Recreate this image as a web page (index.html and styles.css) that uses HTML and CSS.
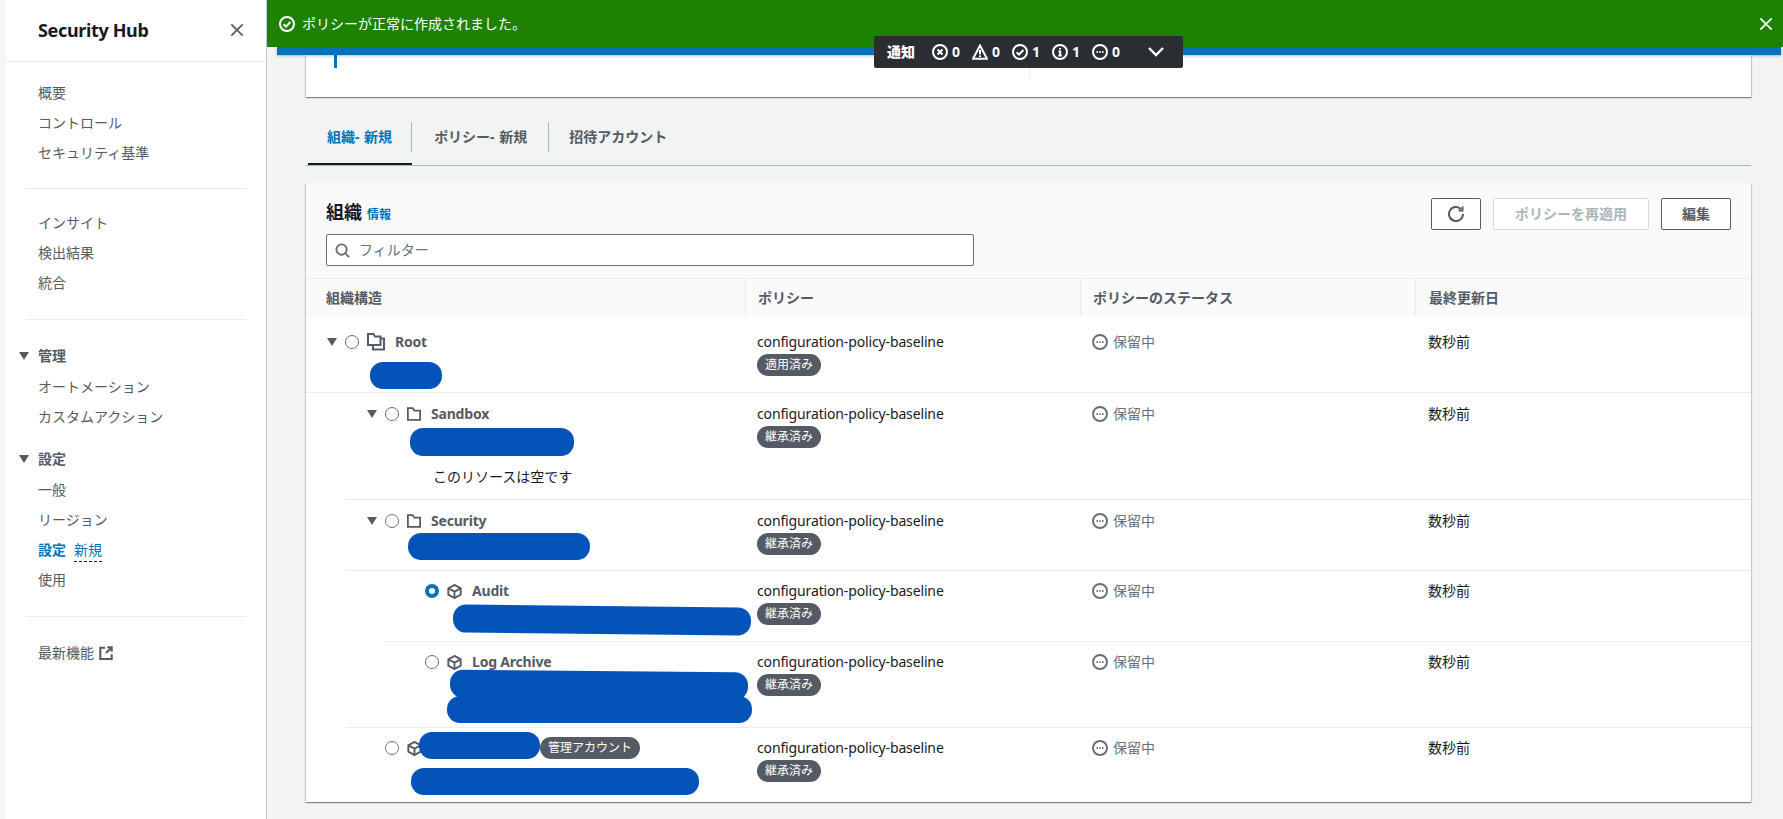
FILE: index.html
```html
<!doctype html>
<html lang="ja">

<head>
  <meta charset="UTF-8" />
  <title>Security Hub</title>
  <link rel="stylesheet" href="styles.css">
</head>

<body>
  <svg class="sprite" aria-hidden="true">
    <symbol id="i-check" viewBox="0 0 16 16"><circle cx="8" cy="8" r="7" /><path d="M4.6 8.2l2.4 2.4 4.4-4.6" /></symbol>
    <symbol id="i-x-circle" viewBox="0 0 16 16"><circle cx="8" cy="8" r="7" /><path d="M5.500 5.500l5 5M10.500 5.500l-5 5" /></symbol>
    <symbol id="i-warn" viewBox="0 0 16 16"><path d="M8 1.500L15 14.700H1z" /><path d="M8 6v4.400M8 11.600v1.400" /></symbol>
    <symbol id="i-info" viewBox="0 0 16 16"><circle cx="8" cy="8" r="7" /><path d="M6.400 7.400H8.200v4M6.400 11.400h3.400M8 4v1.600" /></symbol>
    <symbol id="i-pending" viewBox="0 0 16 16"><circle cx="8" cy="8" r="7" /><path d="M4.500 8h1.400M7.300 8h1.400M10.100 8h1.400" /></symbol>
    <symbol id="i-folder" viewBox="0 0 16 16"><path d="M1 1.200h5.500l1.800 2.800H15v10.800H1z" /></symbol>
    <symbol id="i-root" viewBox="0 0 18 18"><path d="M1 1h5.500l1.500 2.500h5.500V12H1z" /><path d="M13.500 5.500H17v11H6V12" /></symbol>
    <symbol id="i-cube" viewBox="0 0 16 16"><path d="M8 1l6.600 3.600v6.800L8 15l-6.600-3.600V4.600z" /><path d="M1.400 4.600L8 8.200l6.600-3.600M8 8.200V15" /></symbol>
    <symbol id="i-close" viewBox="0 0 16 16"><path d="M1.500 1.500l13 13M14.500 1.500l-13 13" /></symbol>
  </svg>

  <div class="app">
    <div class="edge"></div>

    <nav class="sidebar">
      <header class="side-head">
        <div class="side-title">Security Hub</div>
        <svg class="icon side-close"><use href="#i-close" /></svg>
      </header>
      <ul class="side-list first">
        <li>概要</li>
        <li>コントロール</li>
        <li>セキュリティ基準</li>
      </ul>
      <div class="side-divider"></div>
      <ul class="side-list">
        <li>インサイト</li>
        <li>検出結果</li>
        <li>統合</li>
      </ul>
      <div class="side-divider"></div>
      <div class="side-group"><span class="caret"></span>管理</div>
      <ul class="side-list tight">
        <li>オートメーション</li>
        <li>カスタムアクション</li>
      </ul>
      <div class="side-group next"><span class="caret"></span>設定</div>
      <ul class="side-list tight last">
        <li>一般</li>
        <li>リージョン</li>
        <li><span class="side-active">設定</span><span class="side-new">新規</span></li>
        <li>使用</li>
      </ul>
      <div class="side-divider"></div>
      <ul class="side-list bottom">
        <li class="side-ext">最新機能
          <svg class="ext-icon" viewBox="0 0 16 16"><path d="M14.500 9.500v5.500H1.500V2H7" /><path d="M9.500 1.500h5v5" /><path d="M14 2L8 8" /></svg>
        </li>
      </ul>
    </nav>

    <main class="main">
      <div class="flash">
        <svg class="icon flash-icon"><use href="#i-check" /></svg>
        <span class="flash-text">ポリシーが正常に作成されました。</span>
        <svg class="icon flash-close"><use href="#i-close" /></svg>
      </div>
      <div class="blue-bar"></div>
      <section class="top-card">
        <div class="top-mark"></div>
        <div class="top-split"></div>
      </section>

      <div class="tabs">
        <div class="tab active"><span>組織- 新規</span></div>
        <div class="tab"><span>ポリシー- 新規</span></div>
        <div class="tab"><span>招待アカウント</span></div>
      </div>

      <section class="card">
        <div class="card-head">
          <div class="card-left">
            <div class="card-title">
              <h2>組織</h2>
              <a class="info-link">情報</a>
            </div>
            <div class="filter">
              <svg class="search-icon" viewBox="0 0 16 16"><circle cx="7" cy="7" r="5.500" /><path d="M11 11L15 15" /></svg>
              <span>フィルター</span>
            </div>
          </div>
          <div class="card-actions">
            <button class="btn btn-icon">
              <svg viewBox="0 0 16 16"><path d="M15 8a7 7 0 1 1-2.200-5.100" /><path d="M14.500 0.500v4h-4" /></svg>
            </button>
            <button class="btn btn-apply" disabled>ポリシーを再適用</button>
            <button class="btn btn-edit">編集</button>
          </div>
        </div>

        <div class="row table-head">
          <div>組織構造</div>
          <div>ポリシー</div>
          <div>ポリシーのステータス</div>
          <div class="col-date">最終更新日</div>
        </div>

        <div class="row row-root">
          <div class="tree">
            <div class="node">
              <span class="caret"></span><span class="radio"></span>
              <svg class="icon node-icon root-icon"><use href="#i-root" /></svg>
              <span class="node-name">Root</span>
            </div>
            <div class="redact r-root"></div>
          </div>
          <div class="cell"><div class="policy">configuration-policy-baseline</div><span class="badge">適用済み</span></div>
          <div class="cell status"><svg class="icon"><use href="#i-pending" /></svg>保留中</div>
          <div class="cell col-date">数秒前</div>
        </div>

        <div class="row row-sandbox">
          <div class="tree line-40">
            <div class="node">
              <span class="caret"></span><span class="radio"></span>
              <svg class="icon node-icon folder-icon"><use href="#i-folder" /></svg>
              <span class="node-name">Sandbox</span>
            </div>
            <div class="redact r-sandbox"></div>
            <div class="empty">このリソースは空です</div>
          </div>
          <div class="cell"><div class="policy">configuration-policy-baseline</div><span class="badge">継承済み</span></div>
          <div class="cell status"><svg class="icon"><use href="#i-pending" /></svg>保留中</div>
          <div class="cell col-date">数秒前</div>
        </div>

        <div class="row row-security">
          <div class="tree line-40">
            <div class="node">
              <span class="caret"></span><span class="radio"></span>
              <svg class="icon node-icon folder-icon"><use href="#i-folder" /></svg>
              <span class="node-name">Security</span>
            </div>
            <div class="redact r-security"></div>
          </div>
          <div class="cell"><div class="policy">configuration-policy-baseline</div><span class="badge">継承済み</span></div>
          <div class="cell status"><svg class="icon"><use href="#i-pending" /></svg>保留中</div>
          <div class="cell col-date">数秒前</div>
        </div>

        <div class="row row-audit">
          <div class="tree line-80">
            <div class="node">
              <span class="caret hidden"></span><span class="radio checked"></span>
              <svg class="icon node-icon"><use href="#i-cube" /></svg>
              <span class="node-name">Audit</span>
            </div>
            <div class="redact r-audit"></div>
          </div>
          <div class="cell"><div class="policy">configuration-policy-baseline</div><span class="badge">継承済み</span></div>
          <div class="cell status"><svg class="icon"><use href="#i-pending" /></svg>保留中</div>
          <div class="cell col-date">数秒前</div>
        </div>

        <div class="row row-log">
          <div class="tree line-40 deep">
            <div class="node">
              <span class="caret hidden"></span><span class="radio"></span>
              <svg class="icon node-icon"><use href="#i-cube" /></svg>
              <span class="node-name">Log Archive</span>
            </div>
            <div class="redact r-log1"></div>
            <div class="redact r-log2"></div>
          </div>
          <div class="cell"><div class="policy">configuration-policy-baseline</div><span class="badge">継承済み</span></div>
          <div class="cell status"><svg class="icon"><use href="#i-pending" /></svg>保留中</div>
          <div class="cell col-date">数秒前</div>
        </div>

        <div class="row row-mgmt">
          <div class="tree line-40">
            <div class="node">
              <span class="caret hidden"></span><span class="radio"></span>
              <svg class="icon node-icon"><use href="#i-cube" /></svg>
              <div class="redact r-name"></div>
              <span class="badge mgmt-badge">管理アカウント</span>
            </div>
            <div class="redact r-mgmt"></div>
          </div>
          <div class="cell"><div class="policy">configuration-policy-baseline</div><span class="badge">継承済み</span></div>
          <div class="cell status"><svg class="icon"><use href="#i-pending" /></svg>保留中</div>
          <div class="cell col-date">数秒前</div>
        </div>
      </section>
    </main>

    <div class="notice-bar">
      <strong class="notice-title">通知</strong>
      <span class="notice-item"><svg class="icon"><use href="#i-x-circle" /></svg>0</span>
      <span class="notice-item"><svg class="icon"><use href="#i-warn" /></svg>0</span>
      <span class="notice-item"><svg class="icon"><use href="#i-check" /></svg>1</span>
      <span class="notice-item"><svg class="icon"><use href="#i-info" /></svg>1</span>
      <span class="notice-item"><svg class="icon"><use href="#i-pending" /></svg>0</span>
      <svg class="notice-chevron" viewBox="0 0 16 16"><path d="M1 4l7 7 7-7" /></svg>
    </div>
  </div>
</body>

</html>
```

FILE: styles.css
```css
* {
  margin: 0;
  padding: 0;
  box-sizing: border-box;
}

body {
  background-color: #f2f3f3;
  color: #16191f;
  font-family: "Noto Sans", "Noto Sans CJK JP", sans-serif;
  font-size: 14px;
  line-height: 20px;
  height: 100vh;
  overflow: hidden;
}

.sprite {
  position: absolute;
  width: 0;
  height: 0;
}

.icon {
  fill: none;
  stroke: currentColor;
  stroke-width: 2;
  width: 16px;
  height: 16px;
  flex-shrink: 0;
}

.app {
  display: flex;
  height: 100vh;
  position: relative;
}

.edge {
  width: 6px;
  background-color: #f5f5f5;
  flex-shrink: 0;
}

/* sidebar */
.sidebar {
  width: 261px;
  flex-shrink: 0;
  background-color: #fff;
  border-right: 1px solid #c6c9c9;
  color: #545b64;
}

.side-head {
  height: 62px;
  border-bottom: 1px solid #eaeded;
  display: flex;
  align-items: center;
  justify-content: space-between;
  padding: 0 22px 2px 32px;
}

.side-title {
  font-size: 18px;
  font-weight: 700;
  letter-spacing: -0.35px;
  color: #16191f;
}

.side-close {
  width: 14px;
  height: 14px;
  color: #545b64;
}

.side-list {
  list-style: none;
  padding: 19px 0 21px 32px;
}

.side-list li {
  height: 30px;
  line-height: 30px;
}

.side-list.first {
  padding-top: 16px;
  padding-bottom: 20px;
}

.side-list.tight {
  padding-top: 1px;
  padding-bottom: 0;
}

.side-list.last {
  padding-bottom: 21px;
}

.side-list.bottom {
  padding-top: 21px;
}

.side-divider {
  height: 1px;
  margin: 0 20px;
  background-color: #eaeded;
}

.side-group {
  display: flex;
  align-items: center;
  gap: 9px;
  padding-left: 13px;
  height: 30px;
  margin-top: 21px;
  font-weight: 700;
}

.side-group.next {
  margin-top: 12px;
}

.side-active {
  color: #0073bb;
  font-weight: 700;
}

.side-new {
  color: #0073bb;
  margin-left: 8px;
  padding-bottom: 2px;
  border-bottom: 1px dashed #16191f;
}

.side-ext {
  display: flex;
  align-items: center;
  gap: 5px;
}

.ext-icon {
  width: 14px;
  height: 14px;
  fill: none;
  stroke: #545b64;
  stroke-width: 2.4;
}

.caret {
  width: 0;
  height: 0;
  flex-shrink: 0;
  border-left: 5px solid transparent;
  border-right: 5px solid transparent;
  border-top: 8px solid #545b64;
}

.caret.hidden {
  visibility: hidden;
}

/* main column */
.main {
  flex: 1;
  min-width: 0;
}

.flash {
  height: 47px;
  background-color: #1d8102;
  color: #fff;
  display: flex;
  align-items: center;
  padding: 0 10px 0 12px;
}

.flash-text {
  margin-left: 7px;
  flex: 1;
}

.flash-close {
  width: 14px;
  height: 14px;
}

.blue-bar {
  height: 8px;
  margin: 0 2px 0 10px;
  background-color: #0073bb;
  box-shadow: 0 1px 3px rgba(0, 28, 36, 0.3);
  position: relative;
}

.top-card,
.card {
  margin: 0 32px 0 39px;
  background-color: #fff;
  box-shadow: 0 1px 1px 0 rgba(0, 28, 36, 0.3), 1px 1px 1px 0 rgba(0, 28, 36, 0.15), -1px 1px 1px 0 rgba(0, 28, 36, 0.15);
}

.top-card {
  height: 42px;
  display: flex;
  align-items: flex-start;
}

.top-mark {
  width: 3px;
  height: 13px;
  margin-left: 28px;
  background-color: #0073bb;
}

.top-split {
  width: 1px;
  height: 22px;
  margin-left: 692px;
  background-color: #eaeded;
}

.tabs {
  display: flex;
  height: 44px;
  margin: 25px 32px 17px 39px;
  padding-left: 2px;
  border-bottom: 1px solid #aab7b8;
  font-weight: 700;
  word-spacing: 1px;
  color: #545b64;
}

.tab {
  padding: 0 20px 0 20px;
  height: 43px;
  position: relative;
}

.tab span {
  display: block;
  line-height: 30px;
  height: 30px;
  white-space: nowrap;
}

.tab::after {
  content: "";
  position: absolute;
  right: 0;
  top: 0;
  width: 1px;
  height: 30px;
  background-color: #aab7b8;
}

.tab:last-child::after {
  display: none;
}

.tab.active {
  padding-left: 19px;
  color: #0073bb;
  border-bottom: 2px solid #16191f;
}

.tab.active + .tab {
  padding-left: 22px;
  padding-right: 22px;
}

/* org table */
.card-head {
  height: 95px;
  background-color: #fafafa;
  display: flex;
  justify-content: space-between;
  padding: 15px 20px 0 20px;
}

.card-left {
  display: flex;
  flex-direction: column;
  width: 648px;
}

.card-title {
  display: flex;
  align-items: baseline;
  gap: 5px;
  height: 36px;
  line-height: 28px;
}

.card-title h2 {
  font-size: 18px;
  font-weight: 700;
}

.info-link {
  font-size: 12px;
  font-weight: 700;
  color: #0073bb;
}

.filter {
  height: 32px;
  background-color: #fff;
  border: 1px solid #687078;
  border-radius: 2px;
  display: flex;
  align-items: center;
  gap: 9px;
  padding-left: 8px;
  color: #687078;
}

.search-icon {
  width: 15px;
  height: 15px;
  fill: none;
  stroke: #687078;
  stroke-width: 2;
}

.card-actions {
  display: flex;
  gap: 12px;
}

.btn {
  height: 32px;
  background-color: #fff;
  border: 1px solid #545b64;
  border-radius: 2px;
  color: #545b64;
  font: inherit;
  font-weight: 700;
}

.btn-icon {
  width: 50px;
  display: flex;
  align-items: center;
  justify-content: center;
}

.btn-icon svg {
  width: 16px;
  height: 16px;
  fill: none;
  stroke: #545b64;
  stroke-width: 2;
}

.btn-apply {
  width: 156px;
  border-color: #d5dbdb;
  color: #aab7b8;
}

.btn-edit {
  width: 70px;
}

.row {
  display: grid;
  grid-template-columns: 439px 335px 335px 1fr;
}

.table-head {
  height: 39px;
  background-color: #fafafa;
  border-top: 1px solid #eaeded;
  color: #545b64;
  font-weight: 700;
  line-height: 38px;
}

.table-head > div {
  padding-left: 12px;
  border-left: 1px solid #eaeded;
}

.table-head > div:first-child {
  padding-left: 20px;
  border-left: 0;
}

.tree {
  padding: 11px 0 0 21px;
  border-bottom: 1px solid #eaeded;
}

.tree.line-40 {
  margin-left: 40px;
}

.tree.line-80 {
  margin-left: 80px;
}

.tree.deep {
  padding-left: 61px;
}

.cell {
  padding: 11px 0 0 12px;
  border-bottom: 1px solid #eaeded;
}

.table-head > .col-date,
.cell.col-date {
  padding-left: 13px;
}

.policy {
  letter-spacing: -0.14px;
}

.row-root > * {
  padding-top: 15px;
}

.row-audit > *,
.row-log > *,
.row-mgmt > * {
  padding-top: 10px;
}

.row-root {
  height: 76px;
}

.row-sandbox {
  height: 107px;
}

.row-security,
.row-audit {
  height: 71px;
}

.row-log {
  height: 86px;
}

.row-mgmt {
  height: 74px;
}

.row-mgmt > * {
  border-bottom: 0;
}

.node {
  display: flex;
  align-items: center;
  height: 20px;
}

.radio {
  width: 14px;
  height: 14px;
  margin-left: 8px;
  flex-shrink: 0;
  border: 1px solid #687078;
  border-radius: 50%;
  background-color: #fff;
}

.radio.checked {
  border: 4px solid #0073bb;
}

.node-icon {
  width: 15px;
  height: 15px;
  margin-left: 8px;
  margin-right: 10px;
  color: #545b64;
}

.folder-icon {
  width: 14px;
  height: 14px;
}

.root-icon {
  width: 18px;
  height: 18px;
}

.node-name {
  font-weight: 700;
  letter-spacing: -0.2px;
  color: #545b64;
}

.empty {
  margin: 11px 0 0 66px;
}

.badge {
  display: inline-block;
  height: 22px;
  margin-top: 2px;
  padding: 0 8px;
  border-radius: 11px;
  background-color: #545b64;
  color: #fff;
  font-size: 12px;
  line-height: 22px;
}

.mgmt-badge {
  margin-top: 0;
  flex-shrink: 0;
}

.status {
  display: flex;
  align-items: flex-start;
  gap: 5px;
  color: #687078;
}

.status .icon {
  margin-top: 2px;
}

/* the hand drawn masks hiding account ids */
.redact {
  height: 27px;
  border-radius: 13px;
  background-color: #0353b9;
}

.r-root {
  width: 72px;
  margin: 10px 0 0 43px;
}

.r-sandbox {
  width: 164px;
  height: 28px;
  margin: 4px 0 0 43px;
}

.r-security {
  width: 182px;
  margin: 2px 0 0 41px;
}

.r-audit {
  width: 298px;
  height: 28px;
  margin: 5px 0 0 46px;
  transform: rotate(0.6deg);
}

.r-log1 {
  width: 298px;
  height: 28px;
  margin: -1px 0 0 43px;
  transform: rotate(0.5deg);
}

.r-log2 {
  width: 305px;
  margin: -3px 0 0 40px;
}

.r-name {
  width: 121px;
  flex-shrink: 0;
  margin: -5px 0 0 -13px;
}

.r-mgmt {
  width: 288px;
  margin: 10px 0 0 44px;
}

/* flashbar counter */
.notice-bar {
  position: absolute;
  top: 36px;
  left: 874px;
  width: 309px;
  height: 32px;
  background-color: #2a2e33;
  border-radius: 2px;
  color: #fff;
  display: flex;
  align-items: center;
  padding-left: 13px;
  font-weight: 700;
}

.notice-title {
  width: 45px;
}

.notice-item {
  display: flex;
  align-items: center;
  gap: 4px;
  width: 40px;
}

.notice-chevron {
  width: 16px;
  height: 16px;
  margin-left: 16px;
  fill: none;
  stroke: #fff;
  stroke-width: 2.4;
}
```
